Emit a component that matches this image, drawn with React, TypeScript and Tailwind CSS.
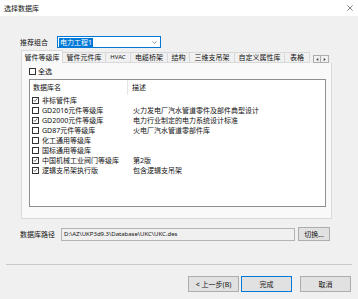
const font = { fontFamily: '"Noto Sans", "Noto Sans CJK SC", sans-serif' };

const rows = [
  { name: "非标管件库", desc: "", on: true },
  { name: "GD2016元件等级库", desc: "火力发电厂汽水管道零件及部件典型设计", on: false },
  { name: "GD2000元件等级库", desc: "电力行业制定的电力系统设计标准", on: true },
  { name: "GD87元件等级库", desc: "火电厂汽水管道零部件库", on: false },
  { name: "化工通用等级库", desc: "", on: false },
  { name: "国标通用等级库", desc: "", on: false },
  { name: "中国机械工业阀门等级库", desc: "第2版", on: true },
  { name: "逻辑支吊架执行版", desc: "包含逻辑支吊架", on: true },
];

const tabs = [
  { label: "管件等级库", w: "w-[42px]" },
  { label: "管件元件库", w: "w-[43px]" },
  { label: "HVAC", w: "w-[25px]" },
  { label: "电缆桥架", w: "w-[37px]" },
  { label: "结构", w: "w-[22px]" },
  { label: "三维支吊架", w: "w-[45px]" },
  { label: "自定义属性库", w: "w-[50px]" },
  { label: "表格", w: "w-[25px]" },
];

const Check = ({ on }: { on: boolean }) => (
  <span className="w-[7px] h-[7px] border border-[#333] bg-white flex items-center justify-center shrink-0">
    {on && (
      <svg viewBox="0 0 8 8" className="w-[6px] h-[6px]">
        <path d="M1 4.2 L3 6.2 L7 1.6" fill="none" stroke="#222" strokeWidth="1" />
      </svg>
    )}
  </span>
);

const Btn = ({ children, blue }: { children: React.ReactNode; blue?: boolean }) => (
  <div
    className={`w-[51px] h-[16px] flex items-center justify-center bg-[#e1e1e1] border ${
      blue ? "border-[#0078d7]" : "border-[#adadad]"
    }`}
  >
    {children}
  </div>
);

export default function App() {
  return (
    <div
      className="w-[358px] h-[299px] bg-[#f0f0f0] text-[7px] leading-[9px] text-[#111] flex flex-col overflow-hidden"
      style={font}
    >
      {/* title bar */}
      <div className="h-[16px] bg-white flex items-center justify-between pl-[4px] pr-[5px] shrink-0">
        <span className="text-[7px]">选择数据库</span>
        <svg viewBox="0 0 8 8" className="w-[6px] h-[6px]">
          <path d="M0.5 0.5 L7.5 7.5 M7.5 0.5 L0.5 7.5" stroke="#333" strokeWidth="0.8" />
        </svg>
      </div>

      <div className="pl-[20px] flex flex-col">
        {/* combo row */}
        <div className="flex items-center mt-[20px] h-[12px]">
          <span className="w-[37px]">推荐组合</span>
          <div className="w-[104px] h-[12px] bg-white border border-[#0078d7] flex items-center justify-between pl-[1px] pr-[3px]">
            <span className="bg-[#0078d7] text-white px-[1px] leading-[9px]">电力工程1</span>
            <svg viewBox="0 0 8 5" className="w-[5px] h-[3px]">
              <path d="M0.5 0.5 L4 4 L7.5 0.5" fill="none" stroke="#555" strokeWidth="1" />
            </svg>
          </div>
        </div>

        {/* tabs */}
        <div className="flex items-end ml-[1px] mt-[2px] h-[13px]">
          {tabs.map((t, i) => (
            <div
              key={t.label}
              className={`${t.w} flex items-center justify-center border-[#d9d9d9] border-t border-r ${
                i === 0 ? "h-[13px] bg-[#f9f9f9] border-l" : "h-[11px] bg-[#f0f0f0] border-b"
              } ${t.label === "HVAC" ? "text-[6px]" : ""}`}
            >
              {t.label}
            </div>
          ))}
          <div className="flex ml-[3px] mb-[0px] h-[8px] self-end">
            <div className="w-[8px] h-[8px] border border-[#adadad] bg-[#f0f0f0] flex items-center justify-center">
              <svg viewBox="0 0 4 4" className="w-[3px] h-[3px]">
                <path d="M3 0 L0.5 2 L3 4 Z" fill="#333" />
              </svg>
            </div>
            <div className="w-[8px] h-[8px] border border-l-0 border-[#adadad] bg-[#f0f0f0] flex items-center justify-center">
              <svg viewBox="0 0 4 4" className="w-[3px] h-[3px]">
                <path d="M1 0 L3.5 2 L1 4 Z" fill="#333" />
              </svg>
            </div>
          </div>
        </div>

        {/* tab panel */}
        <div className="ml-[1px] w-[311px] h-[156px] bg-[#f9f9f9] border border-t-0 border-[#d9d9d9] flex flex-col pl-[7px]">
          <div className="flex items-center gap-[2px] mt-[4px] h-[8px]">
            <Check on={false} />
            <span>全选</span>
          </div>
          <div className="w-[297px] h-[128px] mt-[4px] bg-white border border-[#8f8f8f] flex flex-col">
            <div className="flex h-[15px] items-center">
              <span className="w-[98px] pl-[3px] border-r border-[#e5e5e5] h-full flex items-center">数据库名</span>
              <span className="pl-[4px]">描述</span>
            </div>
            {rows.map((r) => (
              <div key={r.name} className="flex items-center h-[10px]">
                <div className="w-[99px] flex items-center gap-[3px] pl-[2px]">
                  <Check on={r.on} />
                  <span className="whitespace-nowrap">{r.name}</span>
                </div>
                <span className="pl-[4px] whitespace-nowrap">{r.desc}</span>
              </div>
            ))}
          </div>
        </div>

        {/* path row */}
        <div className="flex items-center mt-[8px] h-[14px]">
          <span className="w-[41px]">数据库路径</span>
          <div className="w-[234px] h-[13px] border border-[#b4b4b4] bg-[#f0f0f0] flex items-center pl-[2px] text-[6px]">
            D:\AZ\UKP3d9.3\Database\UKC\UKC.des
          </div>
          <div className="ml-[3px] w-[32px] h-[14px] bg-[#e1e1e1] border border-[#adadad] flex items-center justify-center">
            切换...
          </div>
        </div>
      </div>

      {/* separator */}
      <div className="mx-[6px] mt-[23px] h-px bg-[#c8c8c8]" />

      {/* buttons */}
      <div className="flex justify-end pr-[7px] mt-[11px]">
        <Btn>&lt; 上一步(B)</Btn>
        <div className="ml-[2px]">
          <Btn blue>完成</Btn>
        </div>
        <div className="ml-[8px]">
          <Btn>取消</Btn>
        </div>
      </div>
    </div>
  );
}
